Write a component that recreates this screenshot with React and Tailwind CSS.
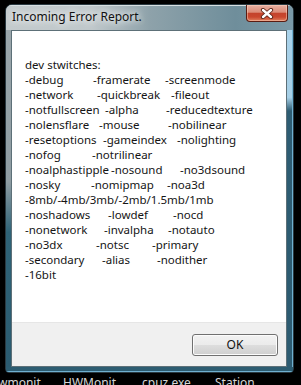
const font = { fontFamily: '"Noto Sans", "Open Sans", sans-serif' };

const rows = [
  [['-debug', 'w-[68px]'], ['-framerate', 'w-[72px]'], ['-screenmode']],
  [['-network', 'w-[72px]'], ['-quickbreak', 'w-[74px]'], ['-fileout']],
  [['-notfullscreen', 'w-[80px]'], ['-alpha', 'w-[61px]'], ['-reducedtexture']],
  [['-nolensflare', 'w-[74px]'], ['-mouse', 'w-[69px]'], ['-nobilinear']],
  [['-resetoptions', 'w-[78px]'], ['-gameindex', 'w-[74px]'], ['-nolighting']],
  [['-nofog', 'w-[67px]'], ['-notrilinear']],
  [['-noalphastipple', 'w-[86px]'], ['-nosound', 'w-[69px]'], ['-no3dsound']],
  [['-nosky', 'w-[66px]'], ['-nomipmap', 'w-[76px]'], ['-noa3d']],
  [['-8mb/-4mb/3mb/-2mb/1.5mb/1mb']],
  [['-noshadows', 'w-[83px]'], ['-lowdef', 'w-[65px]'], ['-nocd']],
  [['-nonetwork', 'w-[79px]'], ['-invalpha', 'w-[64px]'], ['-notauto']],
  [['-no3dx', 'w-[71px]'], ['-notsc', 'w-[56px]'], ['-primary']],
  [['-secondary', 'w-[77px]'], ['-alias', 'w-[55px]'], ['-nodither']],
  [['-16bit']],
];

const taskbar = [
  ['wmonit...', 'w-[65px]'],
  ['HWMonit...', 'w-[79px]'],
  ['cpuz.exe', 'w-[73px]'],
  ['Station', ''],
];

function CloseButton() {
  return (
    <div className="w-[42px] h-[17px] flex items-center justify-center rounded-b-[4px] border border-t-0 border-[#5a1c12] bg-[linear-gradient(180deg,#e8b0a2_0%,#dc8c78_45%,#c4432c_52%,#c9472e_75%,#e0805e_100%)] shadow-[inset_0_0_0_1px_rgba(255,220,200,0.45)]">
      <svg width="14" height="11" viewBox="0 0 14 11">
        <path d="M3 2 L11 9 M11 2 L3 9" stroke="#5b2418" strokeWidth="4.2" strokeLinecap="round" />
        <path d="M3 2 L11 9 M11 2 L3 9" stroke="#ffffff" strokeWidth="2.4" strokeLinecap="round" />
      </svg>
    </div>
  );
}

export default function App() {
  return (
    <div className="w-[301px] h-[385px] overflow-hidden bg-black pt-[4px]" style={font}>
      <div className="ml-[5px] w-[289px] h-[369px] flex flex-col rounded-t-[7px] rounded-b-[4px] overflow-hidden border border-[#2a3a42] bg-[linear-gradient(180deg,#aeb8bc_0%,#a2aeb4_40%,#4f7a8c_60%,#2e6076_100%)]">
        {/* title bar */}
        <div className="h-[25px] flex items-start justify-between bg-[linear-gradient(90deg,#c4cbcd_0%,#c0c8cb_30%,#8ea2aa_50%,#6f8e9b_80%,#7b9aa8_100%)] shadow-[inset_0_1px_0_#d8e0e2]">
          <span className="pl-[6px] pt-[4px] text-[12px] leading-[15px] text-[#111] [text-shadow:0_0_6px_#ffffff,0_0_10px_#eef2f3]">
            Incoming Error Report.
          </span>
          <div className="mr-[5px]">
            <CloseButton />
          </div>
        </div>

        <div className="flex flex-1">
          <div className="w-[5px] bg-[linear-gradient(180deg,#9aa6ab_0%,#8e9ca2_45%,#2f6377_60%,#2b5b70_100%)]" />

          {/* client area */}
          <div className="flex-1 flex flex-col border border-[#5d7078] bg-white">
            <div className="flex-1 pt-[26px] pl-[13px] text-[11.5px] leading-[15px] text-[#151515]">
              <div>dev stwitches:</div>
              {rows.map((row, i) => (
                <div key={i} className="flex whitespace-nowrap">
                  {row.map(([name, w]) => (
                    <span key={name} className={`shrink-0 ${w || ''}`}>
                      {name}
                    </span>
                  ))}
                </div>
              ))}
            </div>
            <div className="h-[44px] flex items-center justify-end pr-[8px] bg-[#f0f0f0] border-t border-[#e6e6e6]">
              <button className="w-[86px] h-[22px] rounded-[3px] border border-[#707070] bg-[linear-gradient(180deg,#f2f2f2_0%,#ebebeb_50%,#dddddd_51%,#cfcfcf_100%)] shadow-[inset_0_0_0_1px_#fcfcfc] text-[12px] leading-[15px] text-[#111]">
                OK
              </button>
            </div>
          </div>

          <div className="w-[6px] bg-[linear-gradient(180deg,#a9d2ea_0%,#a6cfe6_20%,#2e5d73_24%,#2d5b71_100%)] shadow-[inset_-1px_0_0_#6fb0d0]" />
        </div>

        <div className="h-[5px] bg-[#2c5c71] shadow-[inset_0_-1px_0_#6fb0d0]" />
      </div>

      {/* taskbar labels peeking in below */}
      <div className="flex mt-[2px] -ml-[2px] text-[12px] leading-[15px] text-[#d6d6d6] whitespace-nowrap">
        {taskbar.map(([label, w]) => (
          <span key={label} className={`shrink-0 ${w}`}>
            {label}
          </span>
        ))}
      </div>
    </div>
  );
}
